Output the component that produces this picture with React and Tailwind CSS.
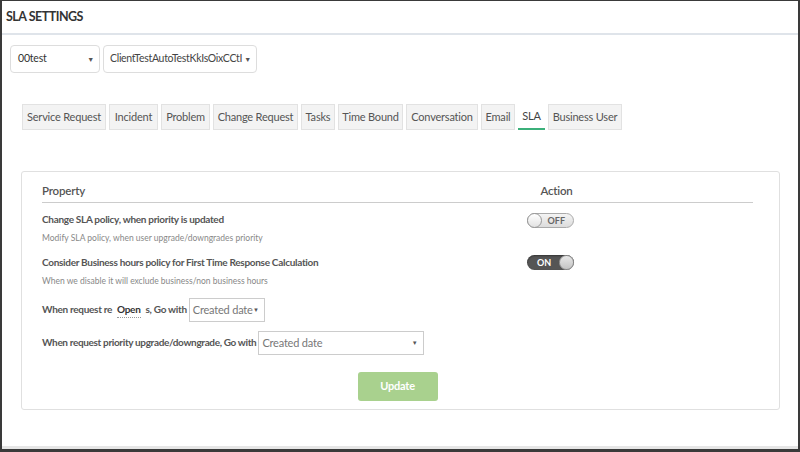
import React from 'react';

const tabs = [
    { label: 'Service Request', w: 'w-[84px]' },
    { label: 'Incident', w: 'w-[49px]' },
    { label: 'Problem', w: 'w-[49px]' },
    { label: 'Change Request', w: 'w-[85px]' },
    { label: 'Tasks', w: 'w-[34px]' },
    { label: 'Time Bound', w: 'w-[65px]' },
    { label: 'Conversation', w: 'w-[72px]' },
    { label: 'Email', w: 'w-[34px]' },
    { label: 'SLA', w: 'w-[27px]', active: true },
    { label: 'Business User', w: 'w-[74px]' },
];

function Toggle({ on }) {
    if (on) {
        return (
            <div className="relative h-[15px] w-[47px] rounded-full bg-[#555] shadow-[inset_0_1px_2px_rgba(0,0,0,0.4)]">
                <span className="absolute left-[10px] top-0 text-[9px] font-bold leading-[15px] text-white">ON</span>
                <span className="absolute right-0 top-0 h-[15px] w-[15px] rounded-full border border-[#999] bg-gradient-to-b from-[#e8e8e8] to-[#c4c4c4]" />
            </div>
        );
    }
    return (
        <div className="relative h-[15px] w-[47px] rounded-full border border-[#aaa] bg-gradient-to-b from-[#f4f4f4] to-[#dcdcdc]">
            <span className="absolute -left-px -top-px h-[15px] w-[15px] rounded-full border border-[#999] bg-gradient-to-b from-white to-[#e2e2e2]" />
            <span className="absolute right-[8px] top-0 text-[9px] font-bold leading-[13px] text-[#666]">OFF</span>
        </div>
    );
}

export default function App() {
    return (
        <div
            className="flex h-[452px] w-[800px] flex-col border-t border-l-2 border-r-2 border-b-[3px] border-[#3a3a3a] bg-white"
            style={{ fontFamily: 'Lato, "Open Sans", sans-serif' }}
        >
            {/* title bar */}
            <div className="flex h-[34px] items-center border-b-2 border-[#dfe4ea] pl-[4px]">
                <h1 className="text-[12.5px] font-bold tracking-[-0.5px] text-[#333]">SLA SETTINGS</h1>
            </div>

            <div className="flex flex-1 flex-col border-b-[3px] border-[#e6e6e6]">
                {/* client pickers */}
                <div className="ml-2 mt-[10px] flex gap-[3px] text-[10.5px] tracking-[-0.2px]">
                    <div className="flex h-[28px] w-[90px] items-center justify-between rounded-sm border border-[#ddd] pl-[7px] pr-[5px] text-[#333]">
                        <span>00test</span>
                        <span className="text-[7px] text-[#555]">▼</span>
                    </div>
                    <div className="flex h-[28px] w-[154px] items-center justify-between rounded-sm border border-[#ddd] pl-[6px] pr-[5px] text-[#444]">
                        <span className="tracking-[-0.3px]">ClientTestAutoTestKkIsOixCCtI</span>
                        <span className="text-[7px] text-[#555]">▼</span>
                    </div>
                </div>

                {/* module tabs */}
                <div className="ml-5 mt-[31px] flex gap-[3px]">
                    {tabs.map((t) => (
                        <div
                            key={t.label}
                            className={
                                t.active
                                    ? `${t.w} flex h-[26px] items-center justify-center whitespace-nowrap border-b-2 border-[#3bb07a] bg-white text-[11px] tracking-[-0.2px] text-[#444]`
                                    : `${t.w} flex h-[26px] items-center justify-center whitespace-nowrap border border-[#e2e2e2] bg-[#f3f3f3] text-[11px] tracking-[-0.2px] text-[#555]`
                            }
                        >
                            {t.label}
                        </div>
                    ))}
                </div>

                {/* settings card */}
                <div className="ml-[19px] mr-[18px] mt-[41px] rounded-[3px] border border-[#e0e0e0] pb-[8px] pl-[20px] pr-[26px] pt-[10px]">
                    <div className="flex border-b border-[#ccc] pb-[3px] text-[11.5px] font-semibold tracking-[-0.2px] text-[#555]">
                        <div className="w-[318px]">Property</div>
                        <div className="flex-1 text-center">Action</div>
                    </div>

                    <div className="mt-[9px] flex">
                        <div className="w-[318px] whitespace-nowrap">
                            <p className="text-[10px] font-bold leading-[14px] tracking-[-0.3px] text-[#555]">Change SLA policy, when priority is updated</p>
                            <p className="mt-[6px] text-[8.5px] text-[#888]">Modify SLA policy, when user upgrade/downgrades priority</p>
                        </div>
                        <div className="flex flex-1 justify-center pr-[12px] pt-[1px]">
                            <Toggle on={false} />
                        </div>
                    </div>

                    <div className="mt-[10px] flex">
                        <div className="w-[318px] whitespace-nowrap">
                            <p className="text-[10px] font-bold leading-[14px] tracking-[-0.3px] text-[#555]">Consider Business hours policy for First Time Response Calculation</p>
                            <p className="mt-[6px] text-[8.5px] text-[#888]">When we disable it will exclude business/non business hours</p>
                        </div>
                        <div className="flex flex-1 justify-center pr-[12px]">
                            <Toggle on />
                        </div>
                    </div>

                    <div className="mt-[10px] flex items-center whitespace-nowrap text-[10px] font-bold tracking-[-0.3px] text-[#555]">
                        <span>When request re</span>
                        <span className="mx-[5px] border-b border-dotted border-[#999] text-[#333]">Open</span>
                        <span>s, Go with</span>
                        <div className="ml-[2px] flex h-[24px] w-[76px] items-center justify-between border border-[#ccc] pl-[3px] pr-[5px] text-[11px] font-normal tracking-[-0.2px] text-[#777]">
                            <span>Created date</span>
                            <span className="text-[6px] text-[#555]">▼</span>
                        </div>
                    </div>

                    <div className="mt-[9px] flex items-center whitespace-nowrap text-[10px] font-bold tracking-[-0.35px] text-[#555]">
                        <span>When request priority upgrade/downgrade, Go with</span>
                        <div className="ml-[2px] flex h-[24px] w-[166px] items-center justify-between border border-[#ccc] pl-[3px] pr-[6px] text-[11px] font-normal tracking-[-0.2px] text-[#777]">
                            <span>Created date</span>
                            <span className="text-[6px] text-[#555]">▼</span>
                        </div>
                    </div>

                    <div className="mt-[17px] flex justify-center">
                        <button className="h-[29px] w-[80px] rounded-[3px] bg-[#a9d18e] text-[11px] font-bold tracking-[-0.2px] text-white">
                            Update
                        </button>
                    </div>
                </div>
            </div>
        </div>
    );
}
